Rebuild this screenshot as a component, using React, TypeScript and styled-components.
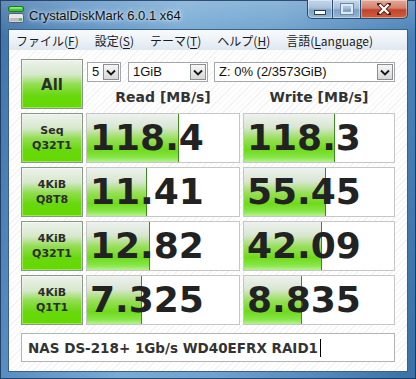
import React from 'react';
import styled, { createGlobalStyle } from 'styled-components';

const GlobalStyle = createGlobalStyle`
  html, body {
    margin: 0;
    padding: 0;
  }
  body {
    width: 416px;
    height: 379px;
    overflow: hidden;
    background: #fff;
  }
`;

const Window = styled.div`
  width: 416px;
  height: 379px;
  box-sizing: border-box;
  display: flex;
  flex-direction: column;
  padding: 0 8px 7px 8px;
  background:
    linear-gradient(to bottom, rgba(255, 255, 255, 0.2), rgba(255, 255, 255, 0) 36px),
    linear-gradient(100deg, #3c72a8 0%, #5a90c2 16%, #78abd5 38%, #6fa3cf 58%, #4f87bc 82%, #3a70a6 100%);
  box-shadow: inset 0 0 0 1px rgba(18, 42, 76, 0.75);
  font-family: 'Liberation Sans', Arial, sans-serif;
`;

const TitleBar = styled.div`
  height: 29px;
  flex: none;
  display: flex;
  align-items: flex-start;
`;

const AppIcon = styled.svg`
  margin-top: 6px;
  flex: none;
`;

const Title = styled.span`
  margin: 8px 0 0 5px;
  font-size: 13px;
  line-height: 15px;
  color: #101010;
  text-shadow: 0 0 6px rgba(255, 255, 255, 0.95), 0 0 3px rgba(255, 255, 255, 0.8);
`;

const Caption = styled.div`
  margin-left: auto;
  display: flex;
`;

const CaptionButton = styled.div<{ $w: number; $kind: 'min' | 'max' | 'close' }>`
  width: ${({ $w }) => $w}px;
  height: 19px;
  box-sizing: border-box;
  display: flex;
  align-items: center;
  justify-content: center;
  border: 1px solid #2c4a6c;
  border-top: none;
  border-left-width: ${({ $kind }) => ($kind === 'min' ? 1 : 0)}px;
  border-radius: ${({ $kind }) =>
    $kind === 'min' ? '0 0 0 5px' : $kind === 'close' ? '0 0 5px 0' : '0'};
  background: ${({ $kind }) =>
    $kind === 'close'
      ? 'linear-gradient(to bottom, #e3aa9c 0%, #d5806c 45%, #c2432c 55%, #cc6040 100%)'
      : 'linear-gradient(to bottom, #c4d7ea 0%, #a6c1db 45%, #7fa1c4 55%, #93b6d7 100%)'};
  box-shadow: inset 0 0 0 1px rgba(255, 255, 255, 0.4);
`;

const MinGlyph = styled.div`
  width: 10px;
  height: 3px;
  margin-top: 6px;
  background: #fff;
  border: 1px solid #2a3f58;
`;

const MaxGlyph = styled.div`
  width: 8px;
  height: 6px;
  border: 2px solid #dfe9f3;
  outline: 1px solid #6e87a3;
`;

const Client = styled.div`
  flex: 1;
  display: flex;
  flex-direction: column;
  border: 1px solid #3f5f84;
  background: #fff;
`;

const MenuBar = styled.div`
  height: 20px;
  flex: none;
  display: flex;
  align-items: center;
  gap: 16px;
  padding-left: 7px;
  background: linear-gradient(to bottom, #f8fafd 0%, #edf2f8 50%, #dfe7f1 100%);
  font-family: 'Noto Sans CJK JP', 'Noto Sans', sans-serif;
  font-size: 12px;
  color: #1b1b1b;

  u {
    text-decoration-thickness: 1px;
    text-underline-offset: 2px;
  }
`;

const Content = styled.div`
  flex: 1;
  padding: 9px 12px 9px 12px;
  background: repeating-linear-gradient(135deg, #ffffff 0 3px, #f3f3f3 3px 4px);
`;

const Board = styled.div`
  display: grid;
  grid-template-columns: 62px 154px 152px;
  grid-auto-rows: 50px;
  column-gap: 3px;
  row-gap: 4px;
`;

const GreenButton = styled.div<{ $big?: boolean }>`
  box-sizing: border-box;
  display: flex;
  flex-direction: column;
  align-items: center;
  justify-content: center;
  border: 1px solid #8a988a;
  background: linear-gradient(
    to bottom,
    #eef2ec 0%,
    #d6e8cc 30%,
    #8fdd4c 52%,
    #68d80e 75%,
    #64d900 100%
  );
  box-shadow: inset 0 0 0 1px rgba(255, 255, 255, 0.35);
  font-family: 'DejaVu Sans', Verdana, sans-serif;
  font-weight: bold;
  font-size: ${({ $big }) => ($big ? 15 : 11)}px;
  line-height: 15px;
  color: #2c2c2c;
  padding-top: ${({ $big }) => ($big ? 2 : 0)}px;
`;

const HeadArea = styled.div`
  grid-column: 2 / 4;
  display: grid;
  grid-template-columns: 154px 152px;
  grid-template-rows: 20px 1fr;
  column-gap: 3px;
  padding-top: 3px;
`;

const SelectRow = styled.div`
  grid-column: 1 / 3;
  display: flex;
`;

const Select = styled.div<{ $w: number; $gap: number }>`
  width: ${({ $w }) => $w}px;
  margin-left: ${({ $gap }) => $gap}px;
  box-sizing: border-box;
  height: 20px;
  display: flex;
  align-items: stretch;
  border: 1px solid #a3a6ab;
  background: #fff;
  font-size: 13px;
  color: #111;
`;

const SelectText = styled.span`
  flex: 1;
  padding-left: 4px;
  line-height: 18px;
  white-space: nowrap;
  overflow: hidden;
`;

const SelectArrow = styled.span`
  width: 16px;
  margin: 1px;
  box-sizing: border-box;
  display: flex;
  align-items: center;
  justify-content: center;
  border: 1px solid #8c8e91;
  background: linear-gradient(to bottom, #f6f6f6 0%, #e8e8e8 50%, #d6d6d6 100%);
`;

const ColumnTitle = styled.div`
  margin-top: 7px;
  text-align: center;
  font-family: 'DejaVu Sans', Verdana, sans-serif;
  font-weight: bold;
  font-size: 14px;
  line-height: 17px;
  color: #333;
`;

const Cell = styled.div`
  display: grid;
  box-sizing: border-box;
  border: 1px solid #c6c6c6;
  background: #fff;
`;

const Bar = styled.div`
  grid-area: 1 / 1;
  justify-self: start;
  box-sizing: border-box;
  border-right: 1px solid #3d8a22;
  background: linear-gradient(
    to bottom,
    #eff2ef 0%,
    #d8e6d2 28%,
    #98df58 52%,
    #6fda1c 74%,
    #86e646 90%,
    #b8f092 100%
  );
`;

const Value = styled.div`
  grid-area: 1 / 1;
  align-self: center;
  padding-left: 3px;
  font-family: 'DejaVu Sans', Verdana, sans-serif;
  font-weight: bold;
  font-size: 36px;
  line-height: 40px;
  color: #222;
`;

const Comment = styled.div`
  margin-top: 8px;
  height: 29px;
  box-sizing: border-box;
  display: flex;
  align-items: center;
  padding-left: 6px;
  border: 1px solid #b3b3b3;
  background: #fff;
  font-family: 'DejaVu Sans', Verdana, sans-serif;
  font-weight: bold;
  font-size: 13.5px;
  color: #333;
`;

const Caret = styled.span`
  width: 1px;
  height: 18px;
  margin-left: 2px;
  background: #000;
`;

const Chevron = () => (
  <svg width="10" height="7" viewBox="0 0 10 7">
    <polyline points="1,1.5 5,5.5 9,1.5" fill="none" stroke="#151515" strokeWidth="1.8" />
  </svg>
);

const results = [
  { size: 'Seq', queue: 'Q32T1', read: '118.4', readPct: 60.5, write: '118.3', writePct: 60.7 },
  { size: '4KiB', queue: 'Q8T8', read: '11.41', readPct: 39.5, write: '55.45', writePct: 54.7 },
  { size: '4KiB', queue: 'Q32T1', read: '12.82', readPct: 41.4, write: '42.09', writePct: 52 },
  { size: '4KiB', queue: 'Q1T1', read: '7.325', readPct: 36, write: '8.835', writePct: 38.7 },
];

const Score = ({ value, pct }: { value: string; pct: number }) => (
  <Cell>
    <Bar style={{ width: `${pct}%` }} />
    <Value>{value}</Value>
  </Cell>
);

const App = () => (
  <>
    <GlobalStyle />
    <Window>
      <TitleBar>
        <AppIcon width="16" height="17" viewBox="0 0 16 17">
          <rect x="0.5" y="0.5" width="15" height="5" rx="1.5" fill="#3fc43a" stroke="#1f7a1f" />
          <rect x="2" y="1.2" width="12" height="1.5" fill="#9ef08c" />
          <rect x="0.5" y="7.5" width="15" height="9" rx="2" fill="#e4e6e8" stroke="#5a5f66" />
          <rect x="1.5" y="12" width="13" height="3.5" rx="1" fill="#b9bec4" />
          <rect x="11" y="12.5" width="3" height="2" fill="#29c22a" />
        </AppIcon>
        <Title>CrystalDiskMark 6.0.1 x64</Title>
        <Caption>
          <CaptionButton $w={26} $kind="min">
            <MinGlyph />
          </CaptionButton>
          <CaptionButton $w={28} $kind="max">
            <MaxGlyph />
          </CaptionButton>
          <CaptionButton $w={47} $kind="close">
            <svg width="14" height="12" viewBox="0 0 14 12">
              <path d="M2 1 L12 11 M12 1 L2 11" stroke="#4a1a12" strokeWidth="4" strokeLinecap="square" />
              <path d="M2.5 1.5 L11.5 10.5 M11.5 1.5 L2.5 10.5" stroke="#fff" strokeWidth="2.4" />
            </svg>
          </CaptionButton>
        </Caption>
      </TitleBar>
      <Client>
        <MenuBar>
          <span>ファイル(<u>F</u>)</span>
          <span>設定(<u>S</u>)</span>
          <span>テーマ(<u>T</u>)</span>
          <span>ヘルプ(<u>H</u>)</span>
          <span>言語(<u>L</u>anguage)</span>
        </MenuBar>
        <Content>
          <Board>
            <GreenButton $big>All</GreenButton>
            <HeadArea>
              <SelectRow>
                <Select $w={34} $gap={1}>
                  <SelectText>5</SelectText>
                  <SelectArrow><Chevron /></SelectArrow>
                </Select>
                <Select $w={80} $gap={7}>
                  <SelectText>1GiB</SelectText>
                  <SelectArrow><Chevron /></SelectArrow>
                </Select>
                <Select $w={181} $gap={6}>
                  <SelectText>Z: 0% (2/3573GiB)</SelectText>
                  <SelectArrow><Chevron /></SelectArrow>
                </Select>
              </SelectRow>
              <ColumnTitle>Read [MB/s]</ColumnTitle>
              <ColumnTitle>Write [MB/s]</ColumnTitle>
            </HeadArea>
            {results.map((r) => (
              <React.Fragment key={r.size + r.queue}>
                <GreenButton>
                  <span>{r.size}</span>
                  <span>{r.queue}</span>
                </GreenButton>
                <Score value={r.read} pct={r.readPct} />
                <Score value={r.write} pct={r.writePct} />
              </React.Fragment>
            ))}
          </Board>
          <Comment>
            NAS DS-218+ 1Gb/s WD40EFRX RAID1
            <Caret />
          </Comment>
        </Content>
      </Client>
    </Window>
  </>
);

export default App;
